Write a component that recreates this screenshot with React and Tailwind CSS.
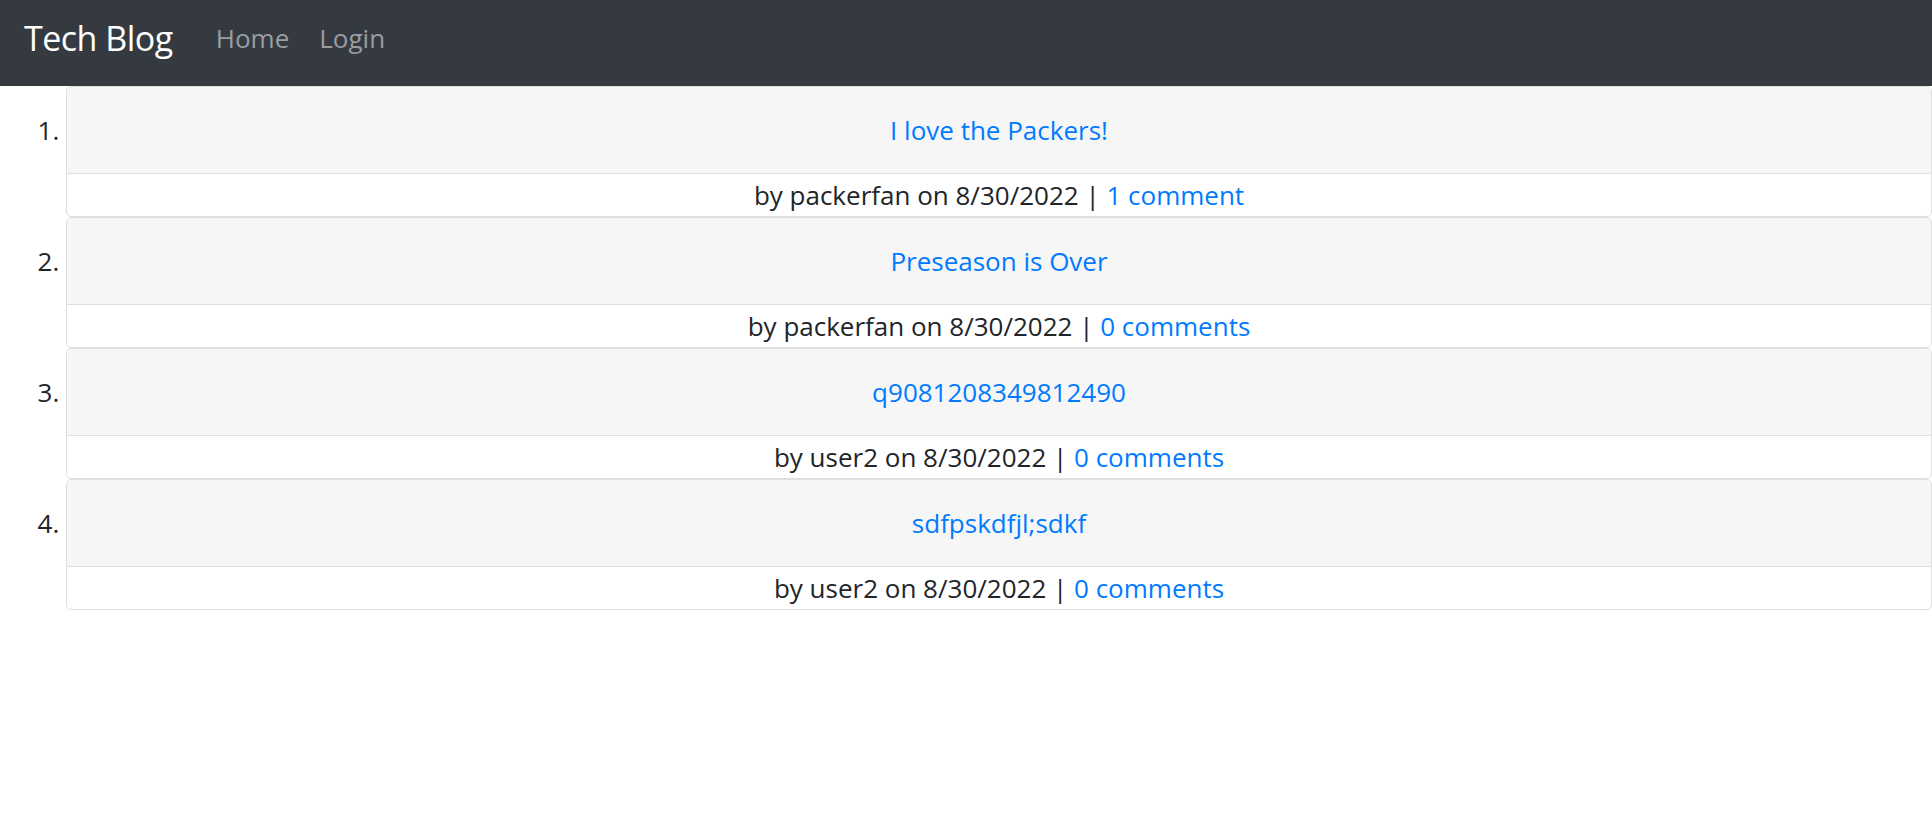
const posts = [
  { title: 'I love the Packers!', user: 'packerfan', date: '8/30/2022', comments: '1 comment' },
  { title: 'Preseason is Over', user: 'packerfan', date: '8/30/2022', comments: '0 comments' },
  { title: 'q9081208349812490', user: 'user2', date: '8/30/2022', comments: '0 comments' },
  { title: 'sdfpskdfjl;sdkf', user: 'user2', date: '8/30/2022', comments: '0 comments' },
];

export default function App() {
  return (
    <div className="min-h-[820px] bg-white text-[#212529] font-['Open_Sans',sans-serif]">
      <nav className="h-[86px] bg-[#343a40] flex items-center px-[24px] pb-[10px]">
        <a href="#" className="text-white text-[34px] tracking-[-0.5px] mr-[43px]">Tech Blog</a>
        <a href="#" className="text-[#9a9da0] text-[26px] mr-[30px]">Home</a>
        <a href="#" className="text-[#9a9da0] text-[26px]">Login</a>
      </nav>
      <ol className="list-decimal pl-[66px] text-[26px]">
        {posts.map((p) => (
          <li key={p.title}>
            <div className="border border-[#dfdfdf] rounded-[5px] overflow-hidden">
              <div className="h-[87px] bg-[#f6f6f6] border-b border-[#dfdfdf] flex items-center justify-center">
                <a href="#" className="text-[#007bff]">{p.title}</a>
              </div>
              <div className="h-[42px] flex items-center justify-center">
                <span>
                  by {p.user} on {p.date} | <a href="#" className="text-[#007bff]">{p.comments}</a>
                </span>
              </div>
            </div>
          </li>
        ))}
      </ol>
    </div>
  );
}
